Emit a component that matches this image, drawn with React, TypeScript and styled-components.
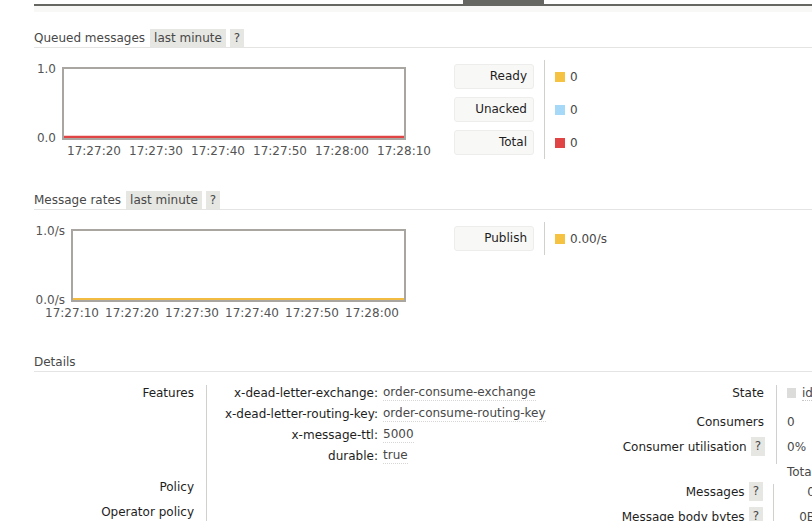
import React from 'react';
import styled, { createGlobalStyle } from 'styled-components';

const GlobalStyle = createGlobalStyle`
  html, body {
    margin: 0;
    padding: 0;
    background: #fff;
    overflow: hidden;
  }
  body {
    font-family: Verdana, "DejaVu Sans", sans-serif;
    font-size: 12px;
    color: #484848;
  }
`;

const Page = styled.div`
  width: 1000px;
  padding-left: 34px;
`;

const TabBar = styled.div`
  height: 4px;
  display: flex;
  border-bottom: 2px solid #666662;
`;

const ActiveTab = styled.div`
  margin-left: 429px;
  width: 81px;
  background: #666662;
`;

const TabShelf = styled.div`
  height: 6px;
  background: #f8f8f6;
`;

const Heading = styled.h2<{ $top: number }>`
  margin: ${(p) => p.$top}px 0 0;
  display: flex;
  align-items: center;
  height: 18px;
  font-size: 12px;
  font-weight: normal;
  color: #484848;
  border-bottom: 1px solid #e4e4e2;
`;

const Pill = styled.span<{ $gap: number }>`
  margin-left: ${(p) => p.$gap}px;
  padding: 0 4px;
  line-height: 18px;
  background: #e6e6e2;
`;

const Help = styled.span`
  display: inline-block;
  vertical-align: top;
  margin: -2px 0 -1px 4px;
  padding: 0 4px;
  line-height: 19px;
  background: #e6e6e2;
  color: #484848;
`;

/* charts */

const ChartRow = styled.div<{ $top: number }>`
  display: flex;
  align-items: flex-start;
  margin-top: ${(p) => p.$top}px;
`;

const ChartArea = styled.div`
  width: 420px;
  flex-shrink: 0;
  padding-top: 7px;
`;

const ChartGrid = styled.div<{ $axis: number; $plot: number }>`
  display: grid;
  grid-template-columns: ${(p) => p.$axis}px ${(p) => p.$plot}px;
  column-gap: 6px;
  color: #545454;
`;

const YAxis = styled.div`
  display: flex;
  flex-direction: column;
  justify-content: space-between;
  margin: -5px 0;
  text-align: right;
  line-height: 14px;
  white-space: nowrap;
`;

const Plot = styled.svg`
  display: block;
`;

const XAxis = styled.div<{ $offset: number }>`
  grid-column: 2;
  display: flex;
  margin: 4px 0 0 ${(p) => p.$offset}px;
  line-height: 14px;
  white-space: nowrap;
`;

const XTick = styled.span<{ $step: number }>`
  flex-shrink: 0;
  width: ${(p) => p.$step}px;
  text-align: center;
`;

type ChartProps = {
  axis: number;
  plot: number;
  yLabels: [string, string];
  xLabels: string[];
  offset: number;
  step: number;
  color: string;
  lineWidth: number;
};

const Chart = ({ axis, plot, yLabels, xLabels, offset, step, color, lineWidth }: ChartProps) => {
  const h = 73;
  return (
    <ChartGrid $axis={axis} $plot={plot}>
      <YAxis>
        <span>{yLabels[0]}</span>
        <span>{yLabels[1]}</span>
      </YAxis>
      <Plot width={plot} height={h} viewBox={`0 0 ${plot} ${h}`}>
        <line x1={2} x2={plot - 2} y1={h - 3} y2={h - 3} stroke={color} strokeWidth={lineWidth} />
        <rect x={1} y={1} width={plot - 2} height={h - 2} fill="none" stroke="#a9a6a2" strokeWidth={2} />
      </Plot>
      <XAxis $offset={offset}>
        {xLabels.map((t) => (
          <XTick key={t} $step={step}>
            {t}
          </XTick>
        ))}
      </XAxis>
    </ChartGrid>
  );
};

const Legend = styled.table`
  border-collapse: collapse;
`;

const LegendKey = styled.th`
  padding: 4px 10px 4px 0;
  font-weight: normal;
`;

const KeyBox = styled.div`
  box-sizing: border-box;
  width: 80px;
  height: 25px;
  padding-right: 6px;
  line-height: 23px;
  text-align: right;
  color: #1e1e1e;
  background: #f8f8f7;
  border: 1px solid #ededeb;
  border-radius: 3px;
`;

const LegendValue = styled.td`
  padding: 0 0 0 10px;
  border-left: 1px solid #d0d0cd;
  white-space: nowrap;
`;

const Swatch = styled.span<{ $color: string }>`
  display: inline-block;
  width: 10px;
  height: 10px;
  margin-right: 5px;
  vertical-align: -1px;
  background: ${(p) => p.$color};
`;

/* details */

const DetailsBody = styled.div`
  display: flex;
  align-items: flex-start;
  margin-top: 13px;
`;

const LeftPanel = styled.div`
  width: 566px;
  flex-shrink: 0;
`;

const InfoGrid = styled.div<{ $cols: string }>`
  display: grid;
  grid-template-columns: ${(p) => p.$cols};
  line-height: 16px;
`;

const InfoLabel = styled.div<{ $pr: number; $pb?: number }>`
  padding: 0 ${(p) => p.$pr}px ${(p) => p.$pb ?? 9}px 0;
  text-align: right;
  color: #1e1e1e;
  white-space: nowrap;
`;

const InfoValue = styled.div<{ $pl: number; $pb?: number; $right?: boolean; $plain?: boolean }>`
  padding: 0 ${(p) => (p.$right ? 10 : 0)}px ${(p) => p.$pb ?? 9}px ${(p) => p.$pl}px;
  border-left: ${(p) => (p.$plain ? 'none' : '1px solid #d0d0cd')};
  text-align: ${(p) => (p.$right ? 'right' : 'left')};
  white-space: nowrap;
`;

const KVList = styled.div`
  display: grid;
  grid-template-columns: 159px auto;
  column-gap: 5px;
  row-gap: 5px;
  padding-bottom: 6px;
`;

const KVKey = styled.span`
  text-align: right;
  color: #1e1e1e;
  white-space: nowrap;
`;

const KVValue = styled.span`
  justify-self: start;
  border-bottom: 1px dotted #d6d6d4;
  line-height: 15px;
  white-space: nowrap;
`;

const RightPanel = styled.div`
  display: flex;
  flex-direction: column;
`;

const StateBox = styled.span`
  display: inline-block;
  width: 9px;
  height: 10px;
  margin-right: 6px;
  vertical-align: -1px;
  background: #dcdcda;
`;

const StateText = styled.span`
  border-bottom: 1px dotted #c8c8c6;
`;

const features: [string, string][] = [
  ['x-dead-letter-exchange:', 'order-consume-exchange'],
  ['x-dead-letter-routing-key:', 'order-consume-routing-key'],
  ['x-message-ttl:', '5000'],
  ['durable:', 'true'],
];

export default function App() {
  return (
    <>
      <GlobalStyle />
      <Page>
        <TabBar>
          <ActiveTab />
        </TabBar>
        <TabShelf />

        <Heading $top={17}>
          Queued messages
          <Pill $gap={5}>last minute</Pill>
          <Pill $gap={4}>?</Pill>
        </Heading>
        <ChartRow $top={12}>
          <ChartArea>
            <Chart
              axis={22}
              plot={344}
              yLabels={['1.0', '0.0']}
              xLabels={['17:27:20', '17:27:30', '17:27:40', '17:27:50', '17:28:00', '17:28:10']}
              offset={1}
              step={62}
              color="#e04444"
              lineWidth={2.5}
            />
          </ChartArea>
          <Legend>
            <tbody>
              <tr>
                <LegendKey><KeyBox>Ready</KeyBox></LegendKey>
                <LegendValue><Swatch $color="#f6c242" />0</LegendValue>
              </tr>
              <tr>
                <LegendKey><KeyBox>Unacked</KeyBox></LegendKey>
                <LegendValue><Swatch $color="#a6d9f7" />0</LegendValue>
              </tr>
              <tr>
                <LegendKey><KeyBox>Total</KeyBox></LegendKey>
                <LegendValue><Swatch $color="#e04444" />0</LegendValue>
              </tr>
            </tbody>
          </Legend>
        </ChartRow>

        <Heading $top={32}>
          Message rates
          <Pill $gap={5}>last minute</Pill>
          <Pill $gap={4}>?</Pill>
        </Heading>
        <ChartRow $top={12}>
          <ChartArea>
            <Chart
              axis={31}
              plot={335}
              yLabels={['1.0/s', '0.0/s']}
              xLabels={['17:27:10', '17:27:20', '17:27:30', '17:27:40', '17:27:50', '17:28:00']}
              offset={-29}
              step={60}
              color="#f2bc42"
              lineWidth={2}
            />
          </ChartArea>
          <Legend>
            <tbody>
              <tr>
                <LegendKey><KeyBox>Publish</KeyBox></LegendKey>
                <LegendValue><Swatch $color="#f6c242" />0.00/s</LegendValue>
              </tr>
            </tbody>
          </Legend>
        </ChartRow>

        <Heading $top={33}>Details</Heading>
        <DetailsBody>
          <LeftPanel>
            <InfoGrid $cols="172px 1fr">
              <InfoLabel $pr={12}>Features</InfoLabel>
              <InfoValue $pl={12} $pb={9}>
                <KVList>
                  {features.map(([k, v]) => (
                    <React.Fragment key={k}>
                      <KVKey>{k}</KVKey>
                      <KVValue>{v}</KVValue>
                    </React.Fragment>
                  ))}
                </KVList>
              </InfoValue>
              <InfoLabel $pr={12}>Policy</InfoLabel>
              <InfoValue $pl={12} />
              <InfoLabel $pr={12}>Operator policy</InfoLabel>
              <InfoValue $pl={12} />
            </InfoGrid>
          </LeftPanel>

          <RightPanel>
            <InfoGrid $cols="176px auto">
              <InfoLabel $pr={12} $pb={13}>State</InfoLabel>
              <InfoValue $pl={10} $pb={13}>
                <StateBox />
                <StateText>idle</StateText>
              </InfoValue>
              <InfoLabel $pr={12}>Consumers</InfoLabel>
              <InfoValue $pl={10}>0</InfoValue>
              <InfoLabel $pr={11}>
                Consumer utilisation<Help>?</Help>
              </InfoLabel>
              <InfoValue $pl={10}>0%</InfoValue>
            </InfoGrid>
            <InfoGrid $cols="173px 52px">
              <InfoLabel $pr={10} $pb={4} />
              <InfoValue $pl={0} $pb={4} $right $plain>
                Total
              </InfoValue>
              <InfoLabel $pr={10}>
                Messages<Help>?</Help>
              </InfoLabel>
              <InfoValue $pl={0} $right>0</InfoValue>
              <InfoLabel $pr={10}>
                Message body bytes<Help>?</Help>
              </InfoLabel>
              <InfoValue $pl={0} $right>0B</InfoValue>
            </InfoGrid>
          </RightPanel>
        </DetailsBody>
      </Page>
    </>
  );
}
